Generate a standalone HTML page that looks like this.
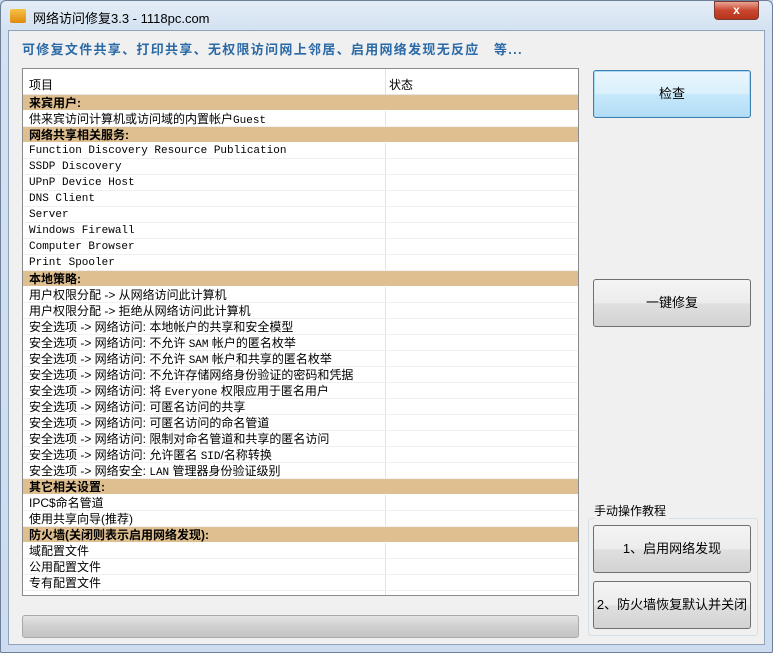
<!DOCTYPE html>
<html><head><meta charset="utf-8"><style>
*{margin:0;padding:0;box-sizing:border-box}
body{width:773px;height:653px;background:#c9d9ec;font-family:"Liberation Sans","Noto Sans CJK SC",sans-serif;position:relative;overflow:hidden}
.frame{position:absolute;left:0;top:0;width:773px;height:653px;border:1px solid #6d7f99;border-radius:6px 6px 2px 2px;background:linear-gradient(#e4edf7,#d3e1f1 30px,#cddcee)}
.title{position:absolute;left:33px;top:8px;font-size:13px;color:#000}
.icon{position:absolute;left:10px;top:9px;width:16px;height:14px;background:linear-gradient(#f6c343,#e08a10);border-radius:2px}
.close{position:absolute;left:714px;top:1px;width:45px;height:19px;background:linear-gradient(#e8a596,#c9452d 50%,#b8361e);border:1px solid #7a3a30;border-radius:0 0 4px 4px;color:#fff;font-weight:bold;font-size:12px;text-align:center;line-height:17px}
.client{position:absolute;left:8px;top:30px;width:757px;height:615px;background:#f0f0f0;border:1px solid #8fa3bd}
.sub{position:absolute;left:22px;top:39px;font-size:13px;font-weight:bold;color:#2b6aa6;letter-spacing:1.3px}
.list{position:absolute;left:22px;top:68px;width:557px;height:528px;background:#fff;border:1px solid #8a8a8a}
.hdr{height:26px;position:relative;font-size:12px;border-bottom:1px solid #e5e5e5}
.hdr span{position:absolute;top:7px}
.row{height:16px;position:relative;font-size:12px;line-height:16px;padding-left:6px;border-bottom:1px solid #f0f0f0;white-space:nowrap}
.row.c{background:#dfbf8f;font-weight:bold;border-bottom:1px solid #fff}
.mono{font-family:"Liberation Mono",monospace;font-size:11px}
.div{position:absolute;left:362px;top:0;width:1px;height:526px;background:#e3e3e3}
.btn{position:absolute;left:593px;width:158px;height:48px;border:1px solid #707070;border-radius:3px;background:linear-gradient(#f4f4f4,#ececec 50%,#e0e0e0 51%,#d2d2d2);font-size:13px;text-align:center;line-height:46px}
.btn.f{border:1px solid #3c7fb1;box-shadow:inset 0 0 0 1px #a9d9f2;background:linear-gradient(#eaf6fd,#d9f0fc 50%,#c6e8fb 51%,#b2ddf5)}
.prog{position:absolute;left:22px;top:615px;width:557px;height:23px;border:1px solid #aaa;border-radius:3px;background:linear-gradient(#e4e4e4,#cfcfcf 50%,#c4c4c4)}
.grp{position:absolute;left:588px;top:518px;width:170px;height:118px;border:1px solid #d5dfe5;border-radius:3px}
.gl{position:absolute;left:594px;top:502px;font-size:12px;background:#f0f0f0;padding-right:3px}
</style></head><body>
<div class="frame"></div>
<div class="icon"></div>
<div class="title">网络访问修复3.3 - 1118pc.com</div>
<div class="close">x</div>
<div class="client"></div>
<div class="sub">可修复文件共享、打印共享、无权限访问网上邻居、启用网络发现无反应　等...</div>
<div class="list">
<div class="div"></div>
<div class="hdr"><span style="left:6px">项目</span><span style="left:366px">状态</span></div>
<div class="row c">来宾用户:</div>
<div class="row">供来宾访问计算机或访问域的内置帐户<span class="mono">Guest</span></div>
<div class="row c">网络共享相关服务:</div>
<div class="row mono">Function Discovery Resource Publication</div>
<div class="row mono">SSDP Discovery</div>
<div class="row mono">UPnP Device Host</div>
<div class="row mono">DNS Client</div>
<div class="row mono">Server</div>
<div class="row mono">Windows Firewall</div>
<div class="row mono">Computer Browser</div>
<div class="row mono">Print Spooler</div>
<div class="row c">本地策略:</div>
<div class="row">用户权限分配 -&gt; 从网络访问此计算机</div>
<div class="row">用户权限分配 -&gt; 拒绝从网络访问此计算机</div>
<div class="row">安全选项 -&gt; 网络访问: 本地帐户的共享和安全模型</div>
<div class="row">安全选项 -&gt; 网络访问: 不允许 <span class="mono">SAM</span> 帐户的匿名枚举</div>
<div class="row">安全选项 -&gt; 网络访问: 不允许 <span class="mono">SAM</span> 帐户和共享的匿名枚举</div>
<div class="row">安全选项 -&gt; 网络访问: 不允许存储网络身份验证的密码和凭据</div>
<div class="row">安全选项 -&gt; 网络访问: 将 <span class="mono">Everyone</span> 权限应用于匿名用户</div>
<div class="row">安全选项 -&gt; 网络访问: 可匿名访问的共享</div>
<div class="row">安全选项 -&gt; 网络访问: 可匿名访问的命名管道</div>
<div class="row">安全选项 -&gt; 网络访问: 限制对命名管道和共享的匿名访问</div>
<div class="row">安全选项 -&gt; 网络访问: 允许匿名 <span class="mono">SID</span>/名称转换</div>
<div class="row">安全选项 -&gt; 网络安全: <span class="mono">LAN</span> 管理器身份验证级别</div>
<div class="row c">其它相关设置:</div>
<div class="row">IPC$命名管道</div>
<div class="row">使用共享向导(推荐)</div>
<div class="row c">防火墙(关闭则表示启用网络发现):</div>
<div class="row">域配置文件</div>
<div class="row">公用配置文件</div>
<div class="row">专有配置文件</div>
</div>
<div class="prog"></div>
<div class="btn f" style="top:70px">检查</div>
<div class="btn" style="top:279px">一键修复</div>
<div class="grp"></div>
<div class="gl">手动操作教程</div>
<div class="btn" style="top:525px">1、启用网络发现</div>
<div class="btn" style="top:581px">2、防火墙恢复默认并关闭</div>
</body></html>
